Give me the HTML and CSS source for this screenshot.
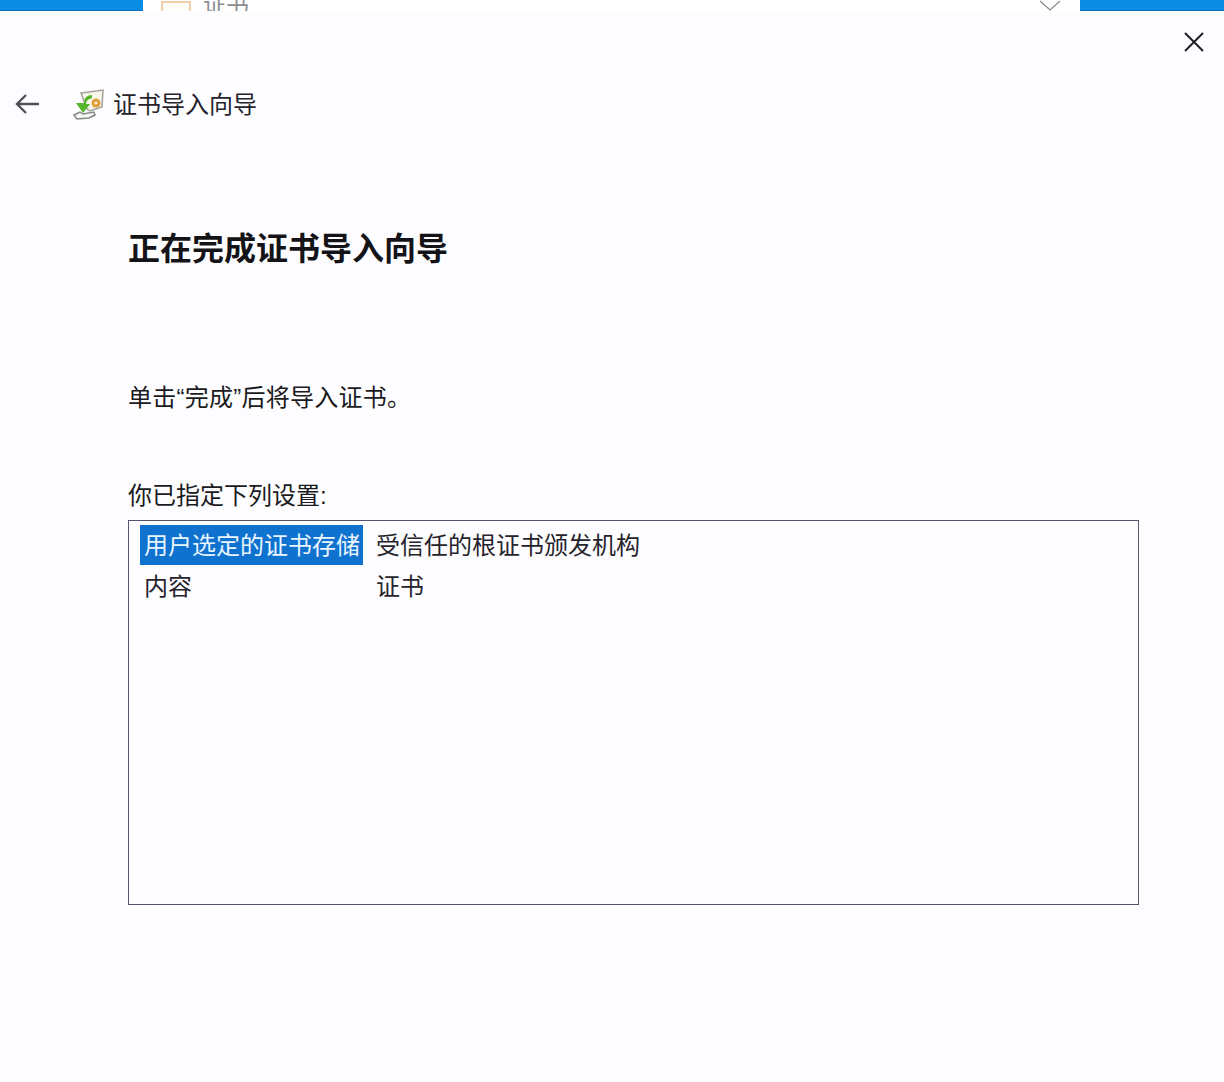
FILE: index.html
```html
<!DOCTYPE html>
<html lang="zh-CN">
<head>
<meta charset="utf-8">
<title>证书导入向导</title>
<link rel="stylesheet" href="styles.css">
</head>
<body>
<div class="topbar">
  <div class="blue blue-left"></div>
  <div class="tab">
    <svg class="tab-icon" width="32" height="24" viewBox="0 0 32 24"><rect x="2" y="1" width="28" height="24" fill="#fffdf8" stroke="#eecfa8" stroke-width="2"/><path d="M9 22h12" stroke="#e0a050" stroke-width="2"/></svg>
    <span class="tab-text">证书</span>
    <svg class="tab-chevron" width="22" height="11" viewBox="0 0 22 11"><path d="M1 1l10 9 10-9" fill="none" stroke="#8a8a8a" stroke-width="1.2"/></svg>
  </div>
  <div class="blue blue-right"></div>
</div>
<div class="close-row">
  <svg width="22" height="22" viewBox="0 0 22 22"><path d="M2 2l18 18M20 2L2 20" stroke="#1c1c22" stroke-width="1.9" fill="none"/></svg>
</div>
<header class="wizard-head">
  <svg class="back" width="26" height="22" viewBox="0 0 26 22"><path d="M24 11H2M11 2l-9 9 9 9" fill="none" stroke="#55505a" stroke-width="2.4"/></svg>
  <svg class="wizard-icon" width="34" height="32" viewBox="0 0 34 32">
    <path d="M9 5l22-3-1 17-12 4-3-2z" fill="#f4f2e8" stroke="#a3a39c" stroke-width="1.5"/>
    <path d="M11 7l18-2-1 11-8 3z" fill="#fbf7e6"/>
    <circle cx="24" cy="15" r="4.5" fill="#dc9d3a"/>
    <circle cx="24" cy="15" r="1.6" fill="#fbeecb"/>
    <path d="M20 7c-5 0-8 3-8 8h-8l7 10 7-9h-4c0-3 2-5 6-6z" fill="#55b52c"/>
    <path d="M2 27l6-3 3 2 11-2 1 3-6 3-12 1z" fill="#f6f6f4" stroke="#858a86" stroke-width="1.5"/>
  </svg>
  <span class="wizard-title">证书导入向导</span>
</header>
<main class="content">
  <h1 class="heading">正在完成证书导入向导</h1>
  <p class="intro">单击“完成”后将导入证书。</p>
  <p class="label">你已指定下列设置:</p>
  <div class="list">
    <div class="row">
      <div class="cell-key selected">用户选定的证书存储</div>
      <div class="cell-val">受信任的根证书颁发机构</div>
    </div>
    <div class="row">
      <div class="cell-key">内容</div>
      <div class="cell-val">证书</div>
    </div>
  </div>
</main>
</body>
</html>
```
FILE: styles.css
```css
html, body {
  margin: 0;
  padding: 0;
}
body {
  width: 1224px;
  height: 1082px;
  overflow: hidden;
  background: #fdfdff;
  color: #1a1a20;
  font-family: "Noto Sans CJK SC", "Liberation Sans", sans-serif;
}
.topbar {
  display: flex;
  height: 11px;
  overflow: hidden;
}
.blue {
  background: #0b8de6;
  border-bottom: 1px solid #0a70bc;
  box-sizing: border-box;
}
.blue-left { width: 143px; }
.blue-right { width: 144px; }
.tab {
  flex: 1;
  display: flex;
  align-items: flex-end;
  height: 11px;
  background: #ffffff;
}
.tab-icon {
  flex: none;
  margin-left: 17px;
  margin-bottom: -14px;
}
.tab-text {
  flex: none;
  margin-left: 11px;
  font-size: 23px;
  line-height: 24px;
  margin-bottom: -4px;
  color: #8d8d92;
}
.tab-chevron {
  margin-left: auto;
  margin-right: 19px;
  flex: none;
}
.close-row {
  display: flex;
  justify-content: flex-end;
  padding: 20px 19px 0 0;
  height: 22px;
}
.wizard-head {
  display: flex;
  align-items: center;
  height: 36px;
  margin-top: 32px;
  padding-left: 15px;
}
.back {
  flex: none;
  margin-top: 2px;
}
.wizard-icon {
  flex: none;
  margin-left: 31px;
  margin-top: 2px;
}
.wizard-title {
  margin-left: 7px;
  font-size: 24px;
  line-height: 36px;
  color: #26232c;
}
.content {
  padding-left: 128px;
}
.heading {
  margin: 102px 0 0 0;
  font-size: 32px;
  line-height: 46px;
  font-weight: 700;
  color: #141418;
}
.intro {
  margin: 111px 0 0 0;
  font-family: "Liberation Sans", "Noto Sans CJK SC", sans-serif;
  font-size: 24px;
  line-height: 36px;
  letter-spacing: 0.25px;
}
.label {
  margin: 62px 0 0 0;
  font-family: "Liberation Sans", "Noto Sans CJK SC", sans-serif;
  font-size: 24px;
  line-height: 36px;
}
.list {
  box-sizing: border-box;
  width: 1011px;
  height: 385px;
  margin-top: 6px;
  border: 1px solid #53536b;
  padding: 3px 11px;
}
.row {
  display: flex;
  height: 41px;
  font-size: 24px;
  line-height: 39px;
}
.cell-key {
  box-sizing: border-box;
  width: 223px;
  height: 41px;
  padding-left: 4px;
  white-space: nowrap;
  color: #26232c;
}
.selected {
  margin-top: 1px;
  height: 40px;
  line-height: 37px;
  background: #0f72cf;
  color: #e9f5ff;
}
.cell-val {
  margin-left: 13px;
  color: #26232c;
}
```
